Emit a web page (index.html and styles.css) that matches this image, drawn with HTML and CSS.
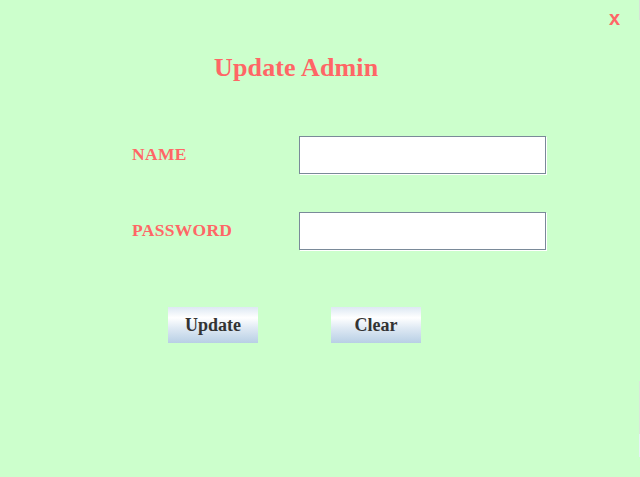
FILE: index.html
```html
<!DOCTYPE html>
<html>
<head>
<meta charset="utf-8">
<title>Update Admin</title>
<link rel="stylesheet" href="styles.css">
</head>
<body>
<div class="frame">
  <span class="close">x</span>
  <h1 class="title">Update Admin</h1>
  <div class="form">
    <label class="label" for="name">NAME</label>
    <input class="field" id="name" type="text">
    <label class="label" for="pw">PASSWORD</label>
    <input class="field" id="pw" type="password">
  </div>
  <div class="actions">
    <button class="btn">Update</button>
    <button class="btn">Clear</button>
  </div>
  <span class="edge edge-top"></span>
  <span class="edge edge-bottom"></span>
</div>
</body>
</html>
```

FILE: styles.css
```css
html, body {
  margin: 0;
  padding: 0;
  background: #CCFFCC;
}

.frame {
  position: relative;
  width: 640px;
  height: 477px;
  box-sizing: border-box;
  padding-top: 53px;
  background: #CCFFCC;
  overflow: hidden;
}

.close {
  position: absolute;
  top: 8px;
  left: 609px;
  font: bold 20px/20px "Liberation Sans", Arial, sans-serif;
  color: #FF6666;
}

.title {
  margin: 0 0 0 214px;
  font: bold 26px/30px "Liberation Serif", "Times New Roman", serif;
  letter-spacing: 0.15px;
  color: #FF6666;
}

.form {
  display: grid;
  grid-template-columns: 167px 247px;
  row-gap: 38px;
  align-items: center;
  margin: 53px 0 0 132px;
}

.label {
  font: bold 17.5px/20px "Liberation Serif", "Times New Roman", serif;
  letter-spacing: 0.3px;
  color: #FF6666;
  position: relative;
  top: -1px;
}

.field {
  display: block;
  width: 247px;
  height: 38px;
  box-sizing: border-box;
  margin: 0;
  padding: 0 3px;
  border: 1px solid #7A8A99;
  background: #FFFFFF;
  box-shadow: 1px 1px 0 #FFFFFF;
  outline: none;
  font: 16px "Liberation Sans", Arial, sans-serif;
}

.actions {
  display: flex;
  gap: 73px;
  margin: 57px 0 0 168px;
}

.btn {
  width: 90px;
  height: 36px;
  margin: 0;
  padding: 0;
  border: 0;
  font: bold 18px "Liberation Serif", "Times New Roman", serif;
  color: #333333;
  background: linear-gradient(to bottom, #DDE8F3 0%, #FFFFFF 30%, #DDE8F3 60%, #B8CFE5 100%);
}

.edge {
  position: absolute;
  right: 0;
  width: 1px;
}

.edge-top {
  top: 0;
  height: 20px;
  background: #D8E0D8;
}

.edge-bottom {
  top: 381px;
  height: 76px;
  background: linear-gradient(to bottom, #DDE3DD 0%, #DDE3DD 70%, #E8F0F8 70%, #E8F0F8 100%);
}
```
